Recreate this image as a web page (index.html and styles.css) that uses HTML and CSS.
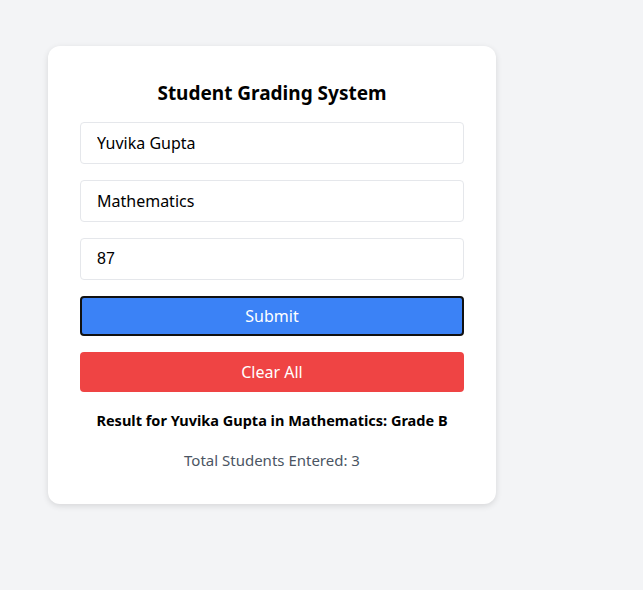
FILE: index.html
```html
<!DOCTYPE html>
<html lang="en">
<head>
<meta charset="utf-8">
<title>Student Grading System</title>
<link rel="stylesheet" href="styles.css">
</head>
<body>
<main class="page">
  <section class="card">
    <h2 class="title">Student Grading System</h2>
    <form class="form">
      <input class="field" type="text" value="Yuvika Gupta">
      <input class="field" type="text" value="Mathematics">
      <input class="field field-num" type="text" value="87">
      <button class="btn btn-submit" type="button">Submit</button>
      <button class="btn btn-clear" type="button">Clear All</button>
    </form>
    <p class="result">Result for Yuvika Gupta in Mathematics: Grade B</p>
    <p class="total">Total Students Entered: 3</p>
  </section>
</main>
</body>
</html>
```
FILE: styles.css
```css
* { box-sizing: border-box; }
html, body { margin: 0; background: #f3f4f6; }
body {
  font-family: "Noto Sans", "Open Sans", sans-serif;
  color: #000;
  width: 643px;
  height: 590px;
}
.page {
  padding: 46px 0 0 48px;
}
.card {
  width: 448px;
  background: #fff;
  border-radius: 12px;
  box-shadow: 0 2px 6px rgba(0,0,0,0.12);
  padding: 32px;
}
.title {
  margin: 1px 0 15px;
  font-size: 19px;
  line-height: 28px;
  font-weight: 700;
  text-align: center;
}
.form {
  display: flex;
  flex-direction: column;
  gap: 16px;
}
.field {
  height: 42px;
  width: 100%;
  border: 1px solid #e5e7eb;
  border-radius: 4px;
  padding: 0 16px;
  font-family: inherit;
  font-size: 16px;
  color: #000;
  background: #fff;
  outline: none;
}
.field-num { font-family: "Liberation Sans", Arial, sans-serif; }
.btn {
  height: 40px;
  width: 100%;
  border: none;
  border-radius: 4px;
  color: #fff;
  font-family: inherit;
  font-size: 16px;
  cursor: pointer;
}
.btn-submit {
  background: #3b82f6;
  border: 2px solid #111;
}
.btn-clear { background: #ef4444; }
.result {
  margin: 16px 0 0;
  font-size: 14.5px;
  line-height: 24px;
  font-weight: 700;
  text-align: center;
}
.total {
  margin: 16px 0 0;
  font-size: 15px;
  line-height: 24px;
  color: #4b5563;
  text-align: center;
}
```
